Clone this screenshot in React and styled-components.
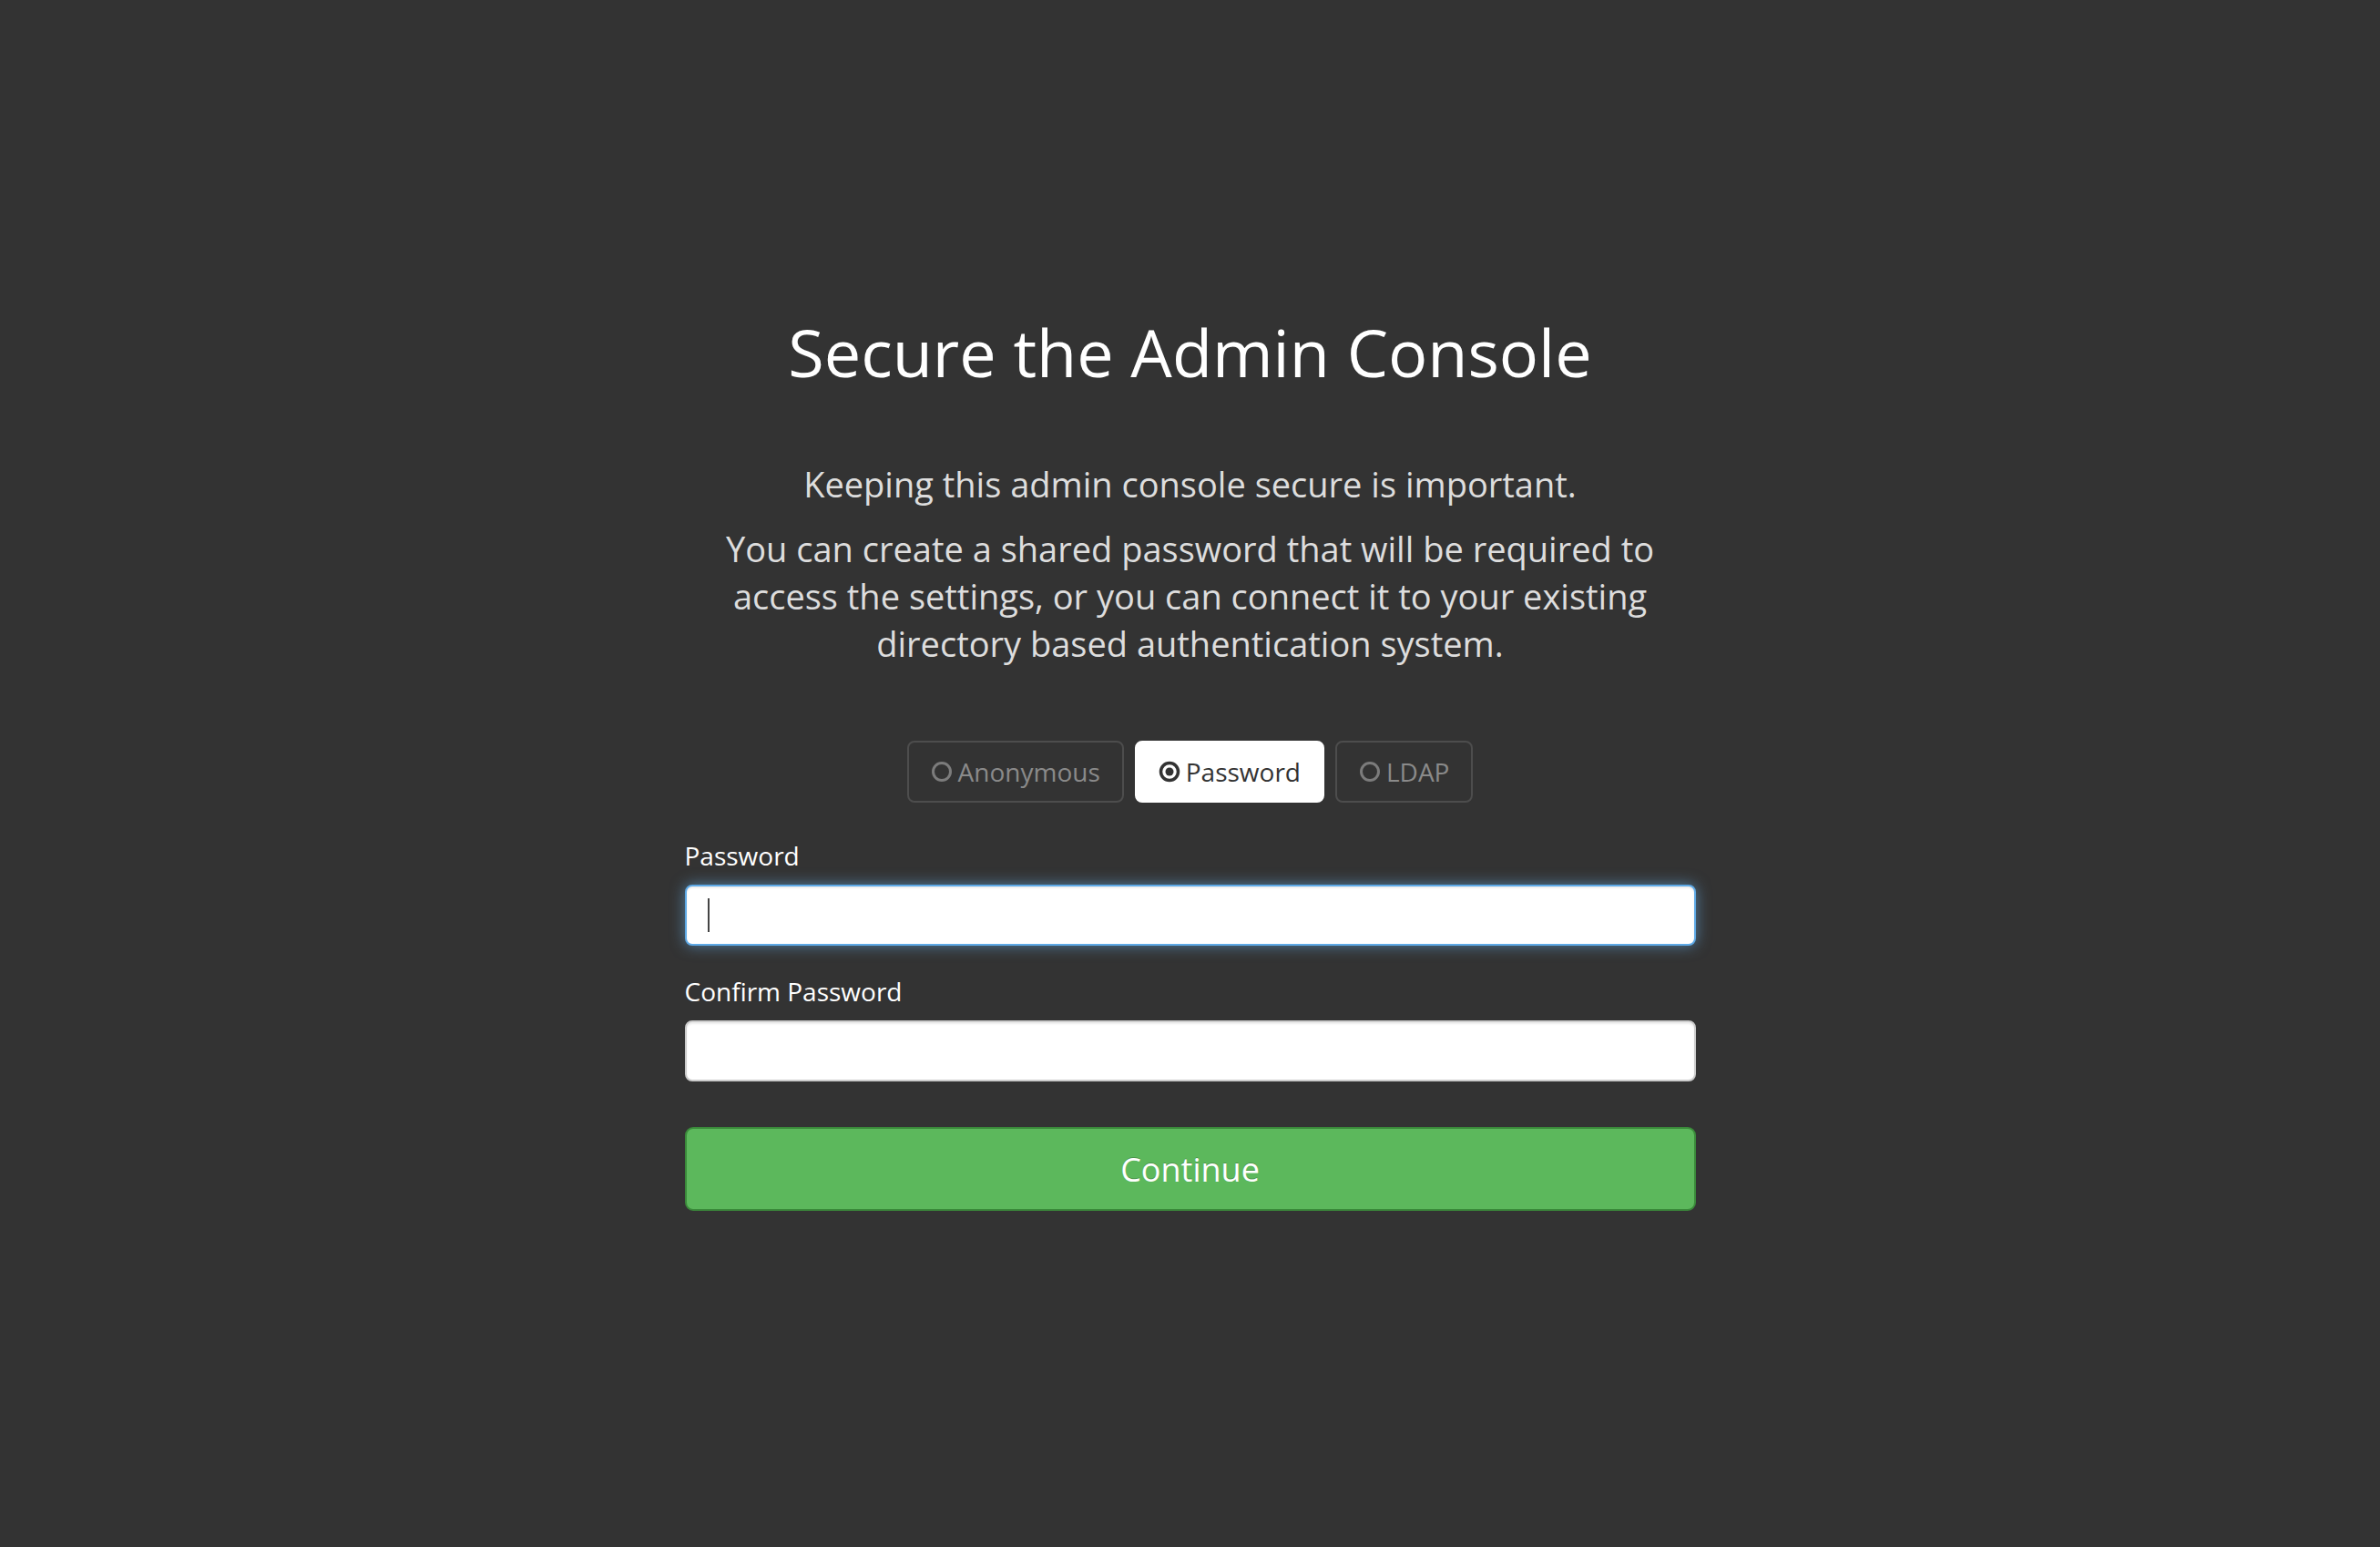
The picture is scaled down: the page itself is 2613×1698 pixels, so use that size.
import React, { useState } from 'react'
import styled, { createGlobalStyle } from 'styled-components'

const GlobalStyle = createGlobalStyle`
html, body {
  margin: 0;
  padding: 0;
  background: #333333;
}
body {
  font-family: "Open Sans", "Noto Sans", sans-serif;
  min-height: 1698px;
}
`;

const Page = styled.div`
display: flex;
flex-direction: column;
align-items: center;
padding-top: 346px;
`;

const Title = styled.h1`
margin: 0;
font-size: 72px;
line-height: 80px;
font-weight: 400;
color: #ffffff;
`;

const Intro = styled.p`
margin: ${(p) => p.$top}px 0 0;
font-size: 38px;
line-height: 52px;
color: #dddddd;
text-align: center;
`;

const Options = styled.div`
display: flex;
gap: 12px;
margin-top: 81px;
`;

const Option = styled.button`
display: flex;
align-items: center;
gap: 6px;
height: 68px;
padding: 0 24px;
border-radius: 8px;
border: 2px solid ${(p) => (p.$active ? '#ffffff' : '#4d4d4d')};
background: ${(p) => (p.$active ? '#ffffff' : 'transparent')};
color: ${(p) => (p.$active ? '#333333' : '#8a8a8a')};
font-family: "Open Sans", sans-serif;
font-size: 28px;
cursor: pointer;
`;

const Form = styled.div`
width: 1110px;
margin-top: 38px;
display: flex;
flex-direction: column;
`;

const Label = styled.label`
font-size: 28px;
line-height: 40px;
color: #ffffff;
margin-top: ${(p) => p.$top || 0}px;
`;

const Field = styled.div`
position: relative;
margin-top: 12px;
`;

const Input = styled.input`
box-sizing: border-box;
width: 100%;
height: 67px;
border-radius: 8px;
border: 2px solid ${(p) => (p.$focused ? '#5ea9e6' : '#cccccc')};
background: #ffffff;
padding: 0 24px;
font-size: 28px;
outline: none;
box-shadow: ${(p) =>
  p.$focused
    ? 'inset 0 2px 2px rgba(0,0,0,.075), 0 0 16px rgba(102,175,233,.6)'
    : 'inset 0 2px 2px rgba(0,0,0,.075)'};
`;

const Caret = styled.span`
position: absolute;
left: 25px;
top: 15px;
width: 2px;
height: 37px;
background: #444444;
`;

const Continue = styled.button`
margin-top: 50px;
height: 92px;
border-radius: 9px;
border: 2px solid #3a8a3a;
background: #5cb85c;
color: #ffffff;
font-family: "Open Sans", sans-serif;
font-size: 36px;
text-shadow: 0 -1px 0 rgba(0,0,0,.2);
cursor: pointer;
`;

const Radio = ({ checked }) => (
  <svg width="24" height="24" viewBox="0 0 24 24">
    {checked ? (
      <>
        <circle cx="12" cy="12" r="9.5" fill="none" stroke="#333" strokeWidth="3.5" />
        <circle cx="12" cy="12" r="4.5" fill="#333" />
      </>
    ) : (
      <circle cx="12" cy="12" r="9.5" fill="none" stroke="#7c7c7c" strokeWidth="3" />
    )}
  </svg>
);

const modes = ['Anonymous', 'Password', 'LDAP'];

const App = () => {
  const [mode, setMode] = useState('Password');
  return (
    <Page>
      <GlobalStyle />
      <Title>Secure the Admin Console</Title>
      <Intro $top={79}>Keeping this admin console secure is important.</Intro>
      <Intro $top={19}>
        You can create a shared password that will be required to
        <br />
        access the settings, or you can connect it to your existing
        <br />
        directory based authentication system.
      </Intro>
      <Options>
        {modes.map((m) => (
          <Option key={m} $active={mode === m} onClick={() => setMode(m)}>
            <Radio checked={mode === m} />
            {m}
          </Option>
        ))}
      </Options>
      <Form>
        <Label>Password</Label>
        <Field>
          <Input type="password" $focused />
          <Caret />
        </Field>
        <Label $top={30}>Confirm Password</Label>
        <Field>
          <Input type="password" />
        </Field>
        <Continue>Continue</Continue>
      </Form>
    </Page>
  )
}

export default App
